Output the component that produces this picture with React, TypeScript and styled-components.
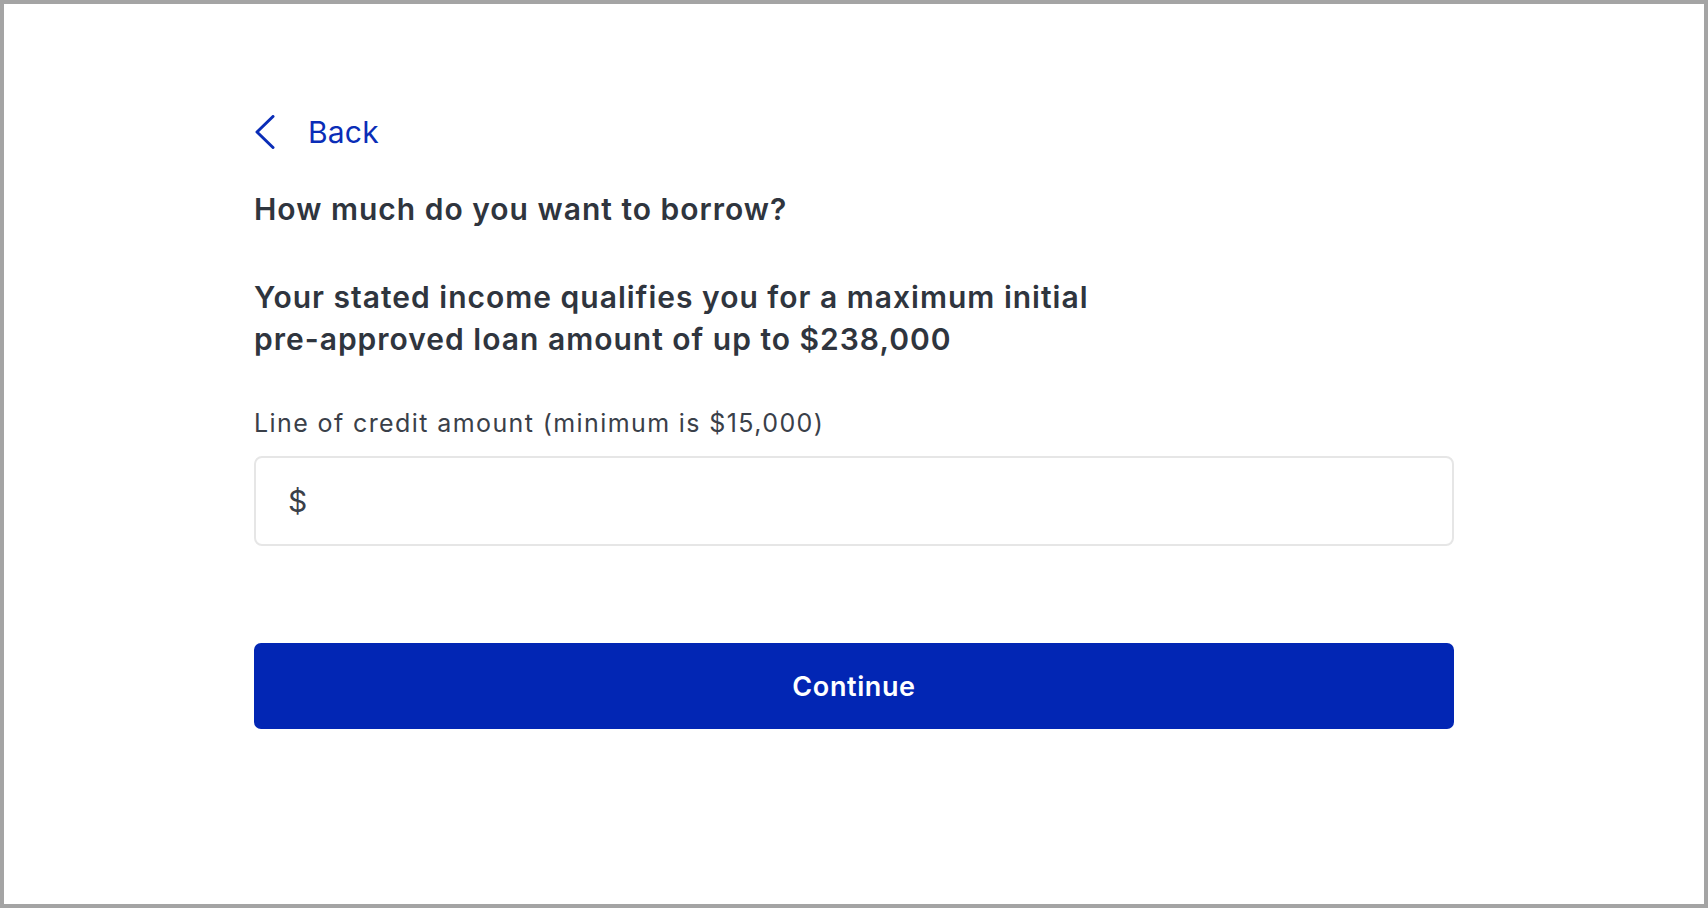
import React from "react";
import styled, { createGlobalStyle } from "styled-components";

const GlobalStyle = createGlobalStyle`
  html, body { margin: 0; padding: 0; background: #ffffff; }
  * { box-sizing: border-box; }
  body { font-family: Inter, "Liberation Sans", Arial, sans-serif; }
`;

const Frame = styled.div`
  width: 1708px;
  height: 908px;
  border: 4px solid #a4a4a4;
  background: #ffffff;
  display: flex;
  justify-content: center;
`;

const Content = styled.main`
  width: 1200px;
  padding-top: 108px;
  display: flex;
  flex-direction: column;
`;

const BackLink = styled.a`
  display: flex;
  align-items: center;
  gap: 33px;
  height: 40px;
  color: #0a2db7;
  font-size: 30px;
  line-height: 40px;
  font-weight: 400;
  letter-spacing: 0.2px;
  text-decoration: none;
  cursor: pointer;
  padding-left: 1px;
`;

const Heading = styled.h1`
  margin: 37px 0 0;
  font-size: 30px;
  line-height: 40px;
  font-weight: 600;
  letter-spacing: 1px;
  color: #2f353e;
`;

const Lead = styled.p`
  margin: 47px 0 0;
  font-size: 30px;
  line-height: 42px;
  font-weight: 600;
  letter-spacing: 1px;
  color: #2f353e;
  max-width: 900px;
`;

const Label = styled.label`
  margin-top: 47px;
  font-size: 25px;
  line-height: 32px;
  font-weight: 400;
  letter-spacing: 1.4px;
  color: #3a4049;
`;

const InputBox = styled.div`
  margin-top: 17px;
  height: 90px;
  border: 2px solid #e6e6e6;
  border-radius: 8px;
  display: flex;
  align-items: center;
  padding-left: 32px;
  gap: 6px;
`;

const Prefix = styled.span`
  font-size: 30px;
  color: #3a4049;
`;

const AmountInput = styled.input`
  flex: 1;
  border: none;
  outline: none;
  background: transparent;
  font-family: inherit;
  font-size: 30px;
  color: #2f353e;
  height: 100%;
`;

const PrimaryButton = styled.button`
  margin-top: 97px;
  height: 86px;
  border: none;
  border-radius: 7px;
  background: #0226b4;
  color: #ffffff;
  font-family: inherit;
  font-size: 27px;
  font-weight: 600;
  letter-spacing: 0.6px;
  cursor: pointer;
`;

export default function App() {
  return (
    <>
      <GlobalStyle />
      <Frame>
        <Content>
          <BackLink>
            <svg width="20" height="34" viewBox="0 0 20 34" fill="none">
              <polyline
                points="18,1.5 2,17 18,32.5"
                stroke="#0a2db7"
                strokeWidth="3"
                strokeLinecap="round"
                strokeLinejoin="round"
              />
            </svg>
            Back
          </BackLink>
          <Heading>How much do you want to borrow?</Heading>
          <Lead>
            Your stated income qualifies you for a maximum initial
            <br />
            pre-approved loan amount of up to $238,000
          </Lead>
          <Label htmlFor="amount">Line of credit amount (minimum is $15,000)</Label>
          <InputBox>
            <Prefix>$</Prefix>
            <AmountInput id="amount" type="text" />
          </InputBox>
          <PrimaryButton>Continue</PrimaryButton>
        </Content>
      </Frame>
    </>
  );
}
